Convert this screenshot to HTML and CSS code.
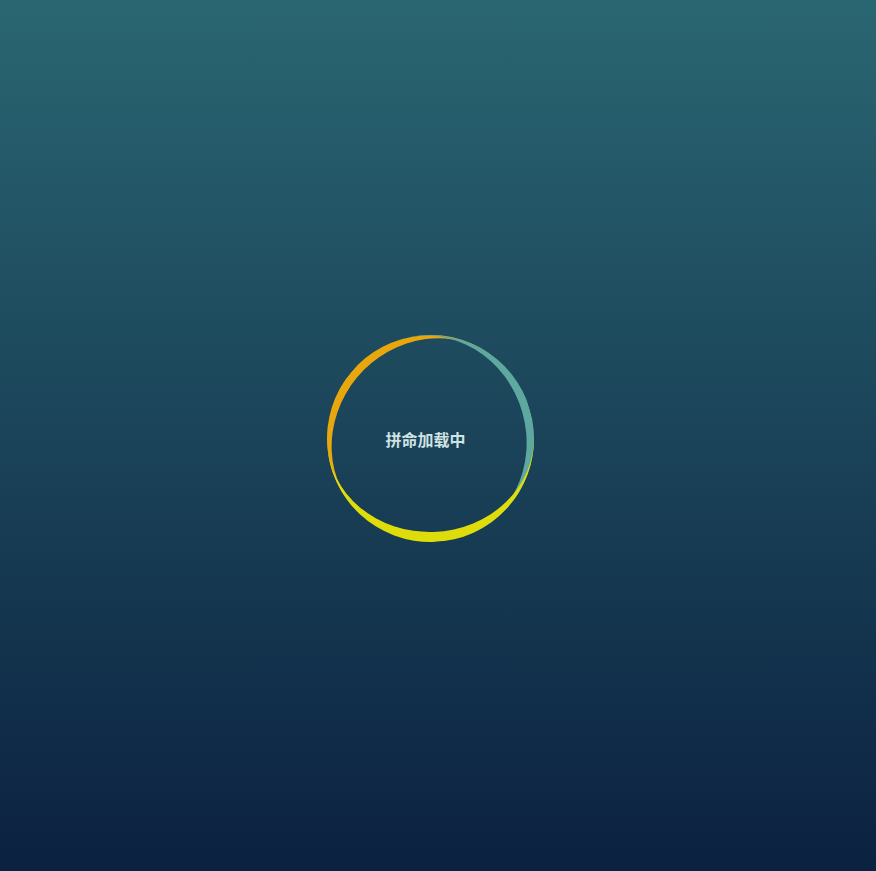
FILE: index.html
```html
<!DOCTYPE html>
<html lang="zh">
<head>
<meta charset="utf-8">
<title>加载中</title>
<link rel="stylesheet" href="styles.css">
</head>
<body>
<div class="page">
  <div class="loader">
    <div class="ring ring-orange"></div>
    <div class="ring ring-teal"></div>
    <div class="ring ring-yellow"></div>
    <span class="label">拼命加载中</span>
  </div>
</div>
</body>
</html>
```
FILE: styles.css
```css
html, body {
  margin: 0;
  padding: 0;
  height: 100%;
}
body {
  background: linear-gradient(to bottom, #2a6672 0%, #0b2140 100%);
  font-family: "Noto Sans CJK SC", "Noto Sans", sans-serif;
}
.page {
  height: 100%;
  display: flex;
  align-items: center;
  justify-content: center;
}
.loader {
  position: relative;
  width: 207px;
  height: 207px;
  margin-right: 16px;
  margin-top: 5px;
  display: flex;
  align-items: center;
  justify-content: center;
}
.ring {
  position: absolute;
  inset: 0;
  border-radius: 50%;
  box-sizing: border-box;
  border: 0 solid transparent;
}
.ring-orange {
  border-left: 8px solid #e9a70e;
  transform: rotate(40deg);
}
.ring-teal {
  border-right: 8px solid #5fa8a0;
  transform: rotate(-16deg);
}
.ring-yellow {
  border-bottom: 10px solid #dedc0b;
  transform: rotate(-2deg);
}
.label {
  position: relative;
  color: #cfe3e3;
  font-size: 16px;
  font-weight: 700;
  margin-right: 9px;
  margin-top: 2px;
}
```
